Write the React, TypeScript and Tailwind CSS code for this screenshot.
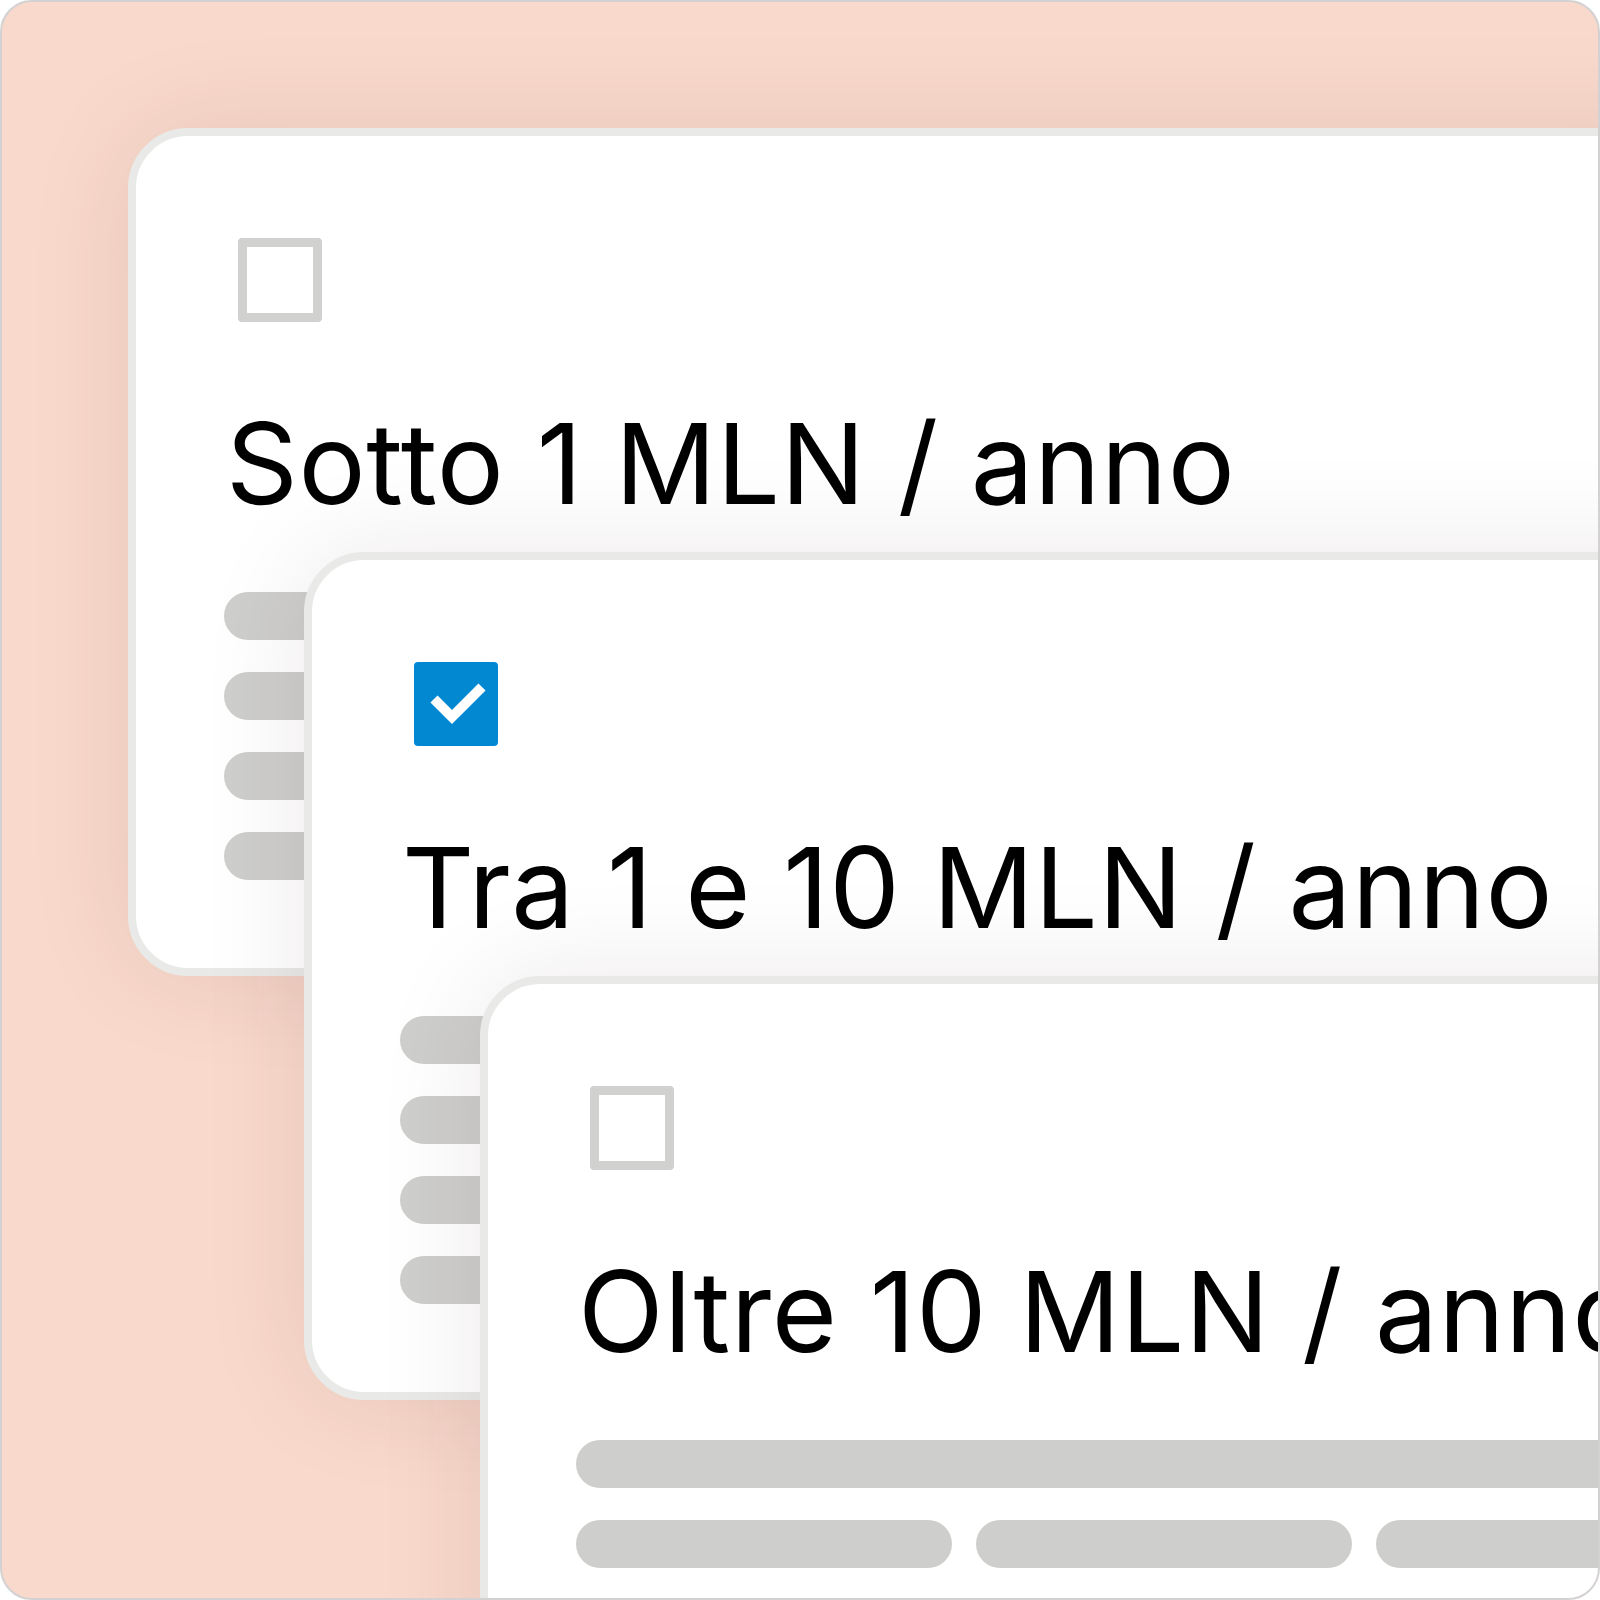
import React from "react";

function Checkbox({ checked }: { checked: boolean }) {
  if (checked) {
    return (
      <div className="ml-[14px] h-[84px] w-[84px] shrink-0 rounded-[4px] bg-[#0288d1]">
        <svg width="84" height="84" viewBox="0 0 84 84">
          <polyline
            points="20,37 38,55 68,25"
            fill="none"
            stroke="#ffffff"
            strokeWidth="10"
            strokeLinecap="butt"
            strokeLinejoin="miter"
          />
        </svg>
      </div>
    );
  }
  return (
    <div className="ml-[14px] h-[84px] w-[84px] shrink-0 rounded-[4px] border-[9px] border-[#d1d1d0] bg-white" />
  );
}

function Bar({ full }: { full?: boolean }) {
  return (
    <div
      className={
        full
          ? "h-[48px] w-[1400px] shrink-0 rounded-full bg-[#cececc]"
          : "h-[48px] w-[376px] shrink-0 rounded-full bg-[#cececc]"
      }
    />
  );
}

function Card({
  label,
  checked,
  className,
}: {
  label: string;
  checked: boolean;
  className: string;
}) {
  return (
    <div
      className={
        "relative h-[848px] w-[1600px] shrink-0 rounded-[60px] border-[8px] border-[#e9e9e7] bg-white pl-[88px] pt-[102px] shadow-[0_0_110px_rgba(60,20,10,0.09)] " +
        className
      }
    >
      <Checkbox checked={checked} />
      <div
        className="ml-[2px] mt-[85px] whitespace-nowrap text-[112px] leading-[112px] tracking-[0.6px] text-black"
        style={{ fontFamily: "Inter, 'Noto Sans', sans-serif" }}
      >
        {label}
      </div>
      <div className="mt-[73px] flex flex-col gap-[32px]">
        <div className="flex">
          <Bar full />
        </div>
        <div className="flex gap-[24px]">
          <Bar />
          <Bar />
          <Bar />
        </div>
        <div className="flex">
          <Bar full />
        </div>
        <div className="flex gap-[24px]">
          <Bar />
          <Bar />
          <Bar />
        </div>
      </div>
    </div>
  );
}

export default function App() {
  return (
    <div className="h-[1600px] w-[1600px] overflow-hidden rounded-[32px] border-2 border-[#d2d2d2] bg-[#f9d9cc]">
      <div className="flex flex-col pl-[126px] pt-[126px]">
        <Card label="Sotto 1 MLN / anno" checked={false} className="" />
        <Card
          label="Tra 1 e 10 MLN / anno"
          checked={true}
          className="-mt-[424px] ml-[176px]"
        />
        <Card
          label="Oltre 10 MLN / anno"
          checked={false}
          className="-mt-[424px] ml-[352px]"
        />
      </div>
    </div>
  );
}
